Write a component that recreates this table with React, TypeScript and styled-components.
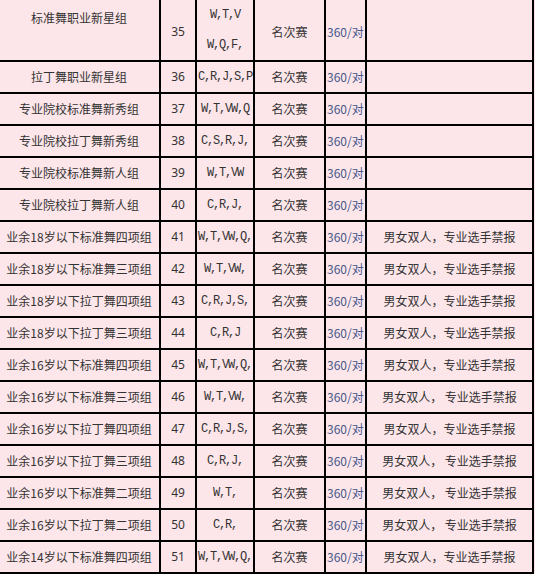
import styled, { createGlobalStyle } from "styled-components"

const GlobalStyle = createGlobalStyle`
  html, body {
    margin: 0;
    padding: 0;
    background: #fde6ea;
    overflow: hidden;
  }
`

type Group = {
  name: string
  no: number
  codes: string[]
  note?: string
}

const NOTE = "男女双人，专业选手禁报"
const NOTE_WIDE = "男女双人， 专业选手禁报"

const groups: Group[] = [
  { name: "标准舞职业新星组", no: 35, codes: ["W,T,V", "W,Q,F,"] },
  { name: "拉丁舞职业新星组", no: 36, codes: ["C,R,J,S,P"] },
  { name: "专业院校标准舞新秀组", no: 37, codes: ["W,T,VW,Q"] },
  { name: "专业院校拉丁舞新秀组", no: 38, codes: ["C,S,R,J,"] },
  { name: "专业院校标准舞新人组", no: 39, codes: ["W,T,VW"] },
  { name: "专业院校拉丁舞新人组", no: 40, codes: ["C,R,J,"] },
  { name: "业余18岁以下标准舞四项组", no: 41, codes: ["W,T,VW,Q,"], note: NOTE },
  { name: "业余18岁以下标准舞三项组", no: 42, codes: ["W,T,VW,"], note: NOTE },
  { name: "业余18岁以下拉丁舞四项组", no: 43, codes: ["C,R,J,S,"], note: NOTE },
  { name: "业余18岁以下拉丁舞三项组", no: 44, codes: ["C,R,J"], note: NOTE },
  { name: "业余16岁以下标准舞四项组", no: 45, codes: ["W,T,VW,Q,"], note: NOTE },
  { name: "业余16岁以下标准舞三项组", no: 46, codes: ["W,T,VW,"], note: NOTE_WIDE },
  { name: "业余16岁以下拉丁舞四项组", no: 47, codes: ["C,R,J,S,"], note: NOTE },
  { name: "业余16岁以下拉丁舞三项组", no: 48, codes: ["C,R,J,"], note: NOTE_WIDE },
  { name: "业余16岁以下标准舞二项组", no: 49, codes: ["W,T,"], note: NOTE_WIDE },
  { name: "业余16岁以下拉丁舞二项组", no: 50, codes: ["C,R,"], note: NOTE_WIDE },
  { name: "业余14岁以下标准舞四项组", no: 51, codes: ["W,T,VW,Q,"], note: NOTE },
]

export default function App() {
  return (
    <>
      <GlobalStyle />
      <Table>
        <colgroup>
          <Col $w={162} />
          <Col $w={36} />
          <Col $w={58} />
          <Col $w={71} />
          <Col $w={41} />
          <Col $w={167} />
        </colgroup>
        <tbody>
          {groups.map((g, i) => (
            <Row key={g.no} $tall={i === 0}>
              <NameCell $top={i === 0}>{g.name}</NameCell>
              <NumCell $tall={i === 0}>{g.no}</NumCell>
              <CodeCell>
                {g.codes.map((c) => (
                  <CodeLine key={c} $multi={g.codes.length > 1}>{c}</CodeLine>
                ))}
              </CodeCell>
              <TextCell $tall={i === 0}>名次赛</TextCell>
              <FeeCell $tall={i === 0}>360/对</FeeCell>
              <TextCell $tall={i === 0}>{g.note ?? ""}</TextCell>
            </Row>
          ))}
        </tbody>
      </Table>
    </>
  )
}

const Table = styled.table`
  border-collapse: separate;
  border-spacing: 0;
  border: 1px solid #000;
  table-layout: fixed;
  width: 537px;
  margin: -2px 0 0 -3px;
  color: #333;
  font-family: "Noto Sans CJK SC", "Noto Sans", sans-serif;
  font-size: 12px;
`

const Col = styled.col<{ $w: number }>`
  width: ${(p) => p.$w}px;
`

const Row = styled.tr<{ $tall?: boolean }>`
  height: ${(p) => (p.$tall ? 62 : 32)}px;
`

const Cell = styled.td<{ $tall?: boolean }>`
  border: 1px solid #000;
  padding: ${(p) => (p.$tall ? "4px 0 0" : "0")};
  text-align: center;
  vertical-align: middle;
  line-height: 18px;
  white-space: nowrap;
  overflow: hidden;
`

const NameCell = styled(Cell)<{ $top?: boolean }>`
  vertical-align: ${(p) => (p.$top ? "top" : "middle")};
  padding-top: ${(p) => (p.$top ? "9px" : "0")};
`

const NumCell = styled(Cell)`
  font-family: "Noto Sans", sans-serif;
`

const TextCell = styled(Cell)``

const FeeCell = styled(Cell)`
  text-align: left;
  padding-left: 1px;
  color: #45598a;
`

const CodeCell = styled(Cell)`
  font-family: "Liberation Mono", monospace;
  letter-spacing: -1.2px;
`

const CodeLine = styled.div<{ $multi?: boolean }>`
  line-height: ${(p) => (p.$multi ? "30px" : "18px")};
`
